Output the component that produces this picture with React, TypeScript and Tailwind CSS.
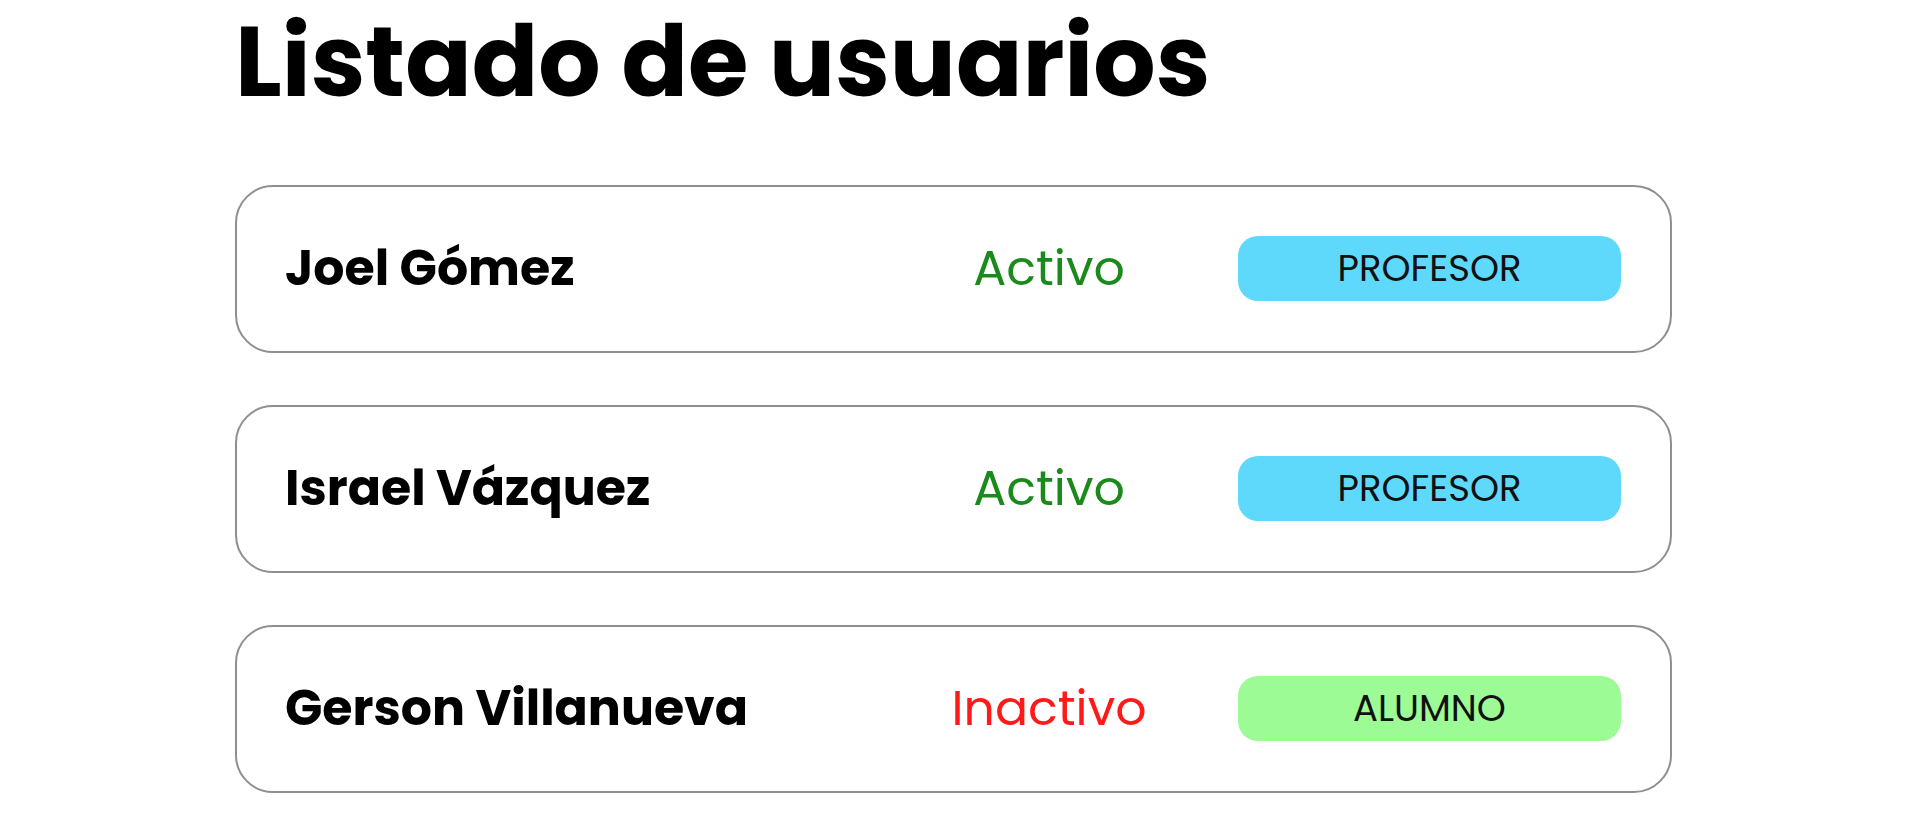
import React from 'react';

type Usuario = {
  nombre: string;
  activo: boolean;
  rol: 'PROFESOR' | 'ALUMNO';
};

const USUARIOS: Usuario[] = [
  { nombre: 'Joel Gómez', activo: true, rol: 'PROFESOR' },
  { nombre: 'Israel Vázquez', activo: true, rol: 'PROFESOR' },
  { nombre: 'Gerson Villanueva', activo: false, rol: 'ALUMNO' },
];

const App: React.FC = () => {
  return (
    <main className="min-h-screen bg-white font-['Poppins','Inter',sans-serif] text-black">
      <div className="ml-[235px] w-[1437px]">
        <h1 className="pt-[3px] text-[98px] font-bold leading-[1.2]">
          Listado de usuarios
        </h1>

        <ul className="mt-[64px] flex flex-col gap-[52px]">
          {USUARIOS.map((u) => (
            <li
              key={u.nombre}
              className="grid h-[168px] grid-cols-[1fr_378px_383px] items-center rounded-[38px] border-2 border-[#8f8f8f] pl-[48px] pr-[49px]"
            >
              <span className="text-[49px] font-bold">{u.nombre}</span>
              <span
                className={
                  u.activo
                    ? 'text-center text-[49px] text-[#1a8a1a]'
                    : 'text-center text-[49px] text-[#ff1a1a]'
                }
              >
                {u.activo ? 'Activo' : 'Inactivo'}
              </span>
              <span
                className={
                  u.rol === 'PROFESOR'
                    ? 'flex h-[65px] items-center justify-center rounded-[20px] bg-[#5fd9fb] text-[37px] text-[#111]'
                    : 'flex h-[65px] items-center justify-center rounded-[20px] bg-[#9cfb94] text-[37px] text-[#111]'
                }
              >
                {u.rol}
              </span>
            </li>
          ))}
        </ul>
      </div>
    </main>
  );
};

export default App;
